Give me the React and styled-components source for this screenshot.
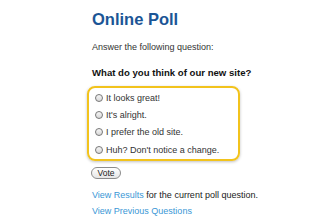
import styled, { createGlobalStyle } from "styled-components";

const GlobalStyle = createGlobalStyle`
  body {
    margin: 0;
    background: #fff;
    font-family: "Liberation Sans", Arial, sans-serif;
    color: #222;
  }
`;

const Page = styled.div`
  width: 330px;
  height: 220px;
  padding: 9px 0 0 92px;
  box-sizing: border-box;
  overflow: hidden;
`;

const Title = styled.h1`
  margin: 0;
  font-size: 16.5px;
  line-height: 20px;
  font-weight: bold;
  color: #1b5596;
`;

const Intro = styled.p`
  margin: 12px 0 0;
  font-size: 9px;
  line-height: 12px;
  color: #333;
`;

const Question = styled.h2`
  margin: 14px 0 0;
  font-size: 9.6px;
  line-height: 12px;
  font-weight: bold;
  color: #111;
`;

const OptionsBox = styled.div`
  margin: 7px 0 0 -5px;
  width: 153px;
  box-sizing: border-box;
  border: 2px solid #f2c31c;
  border-radius: 8px;
  box-shadow: 0 1px 3px rgba(0, 0, 0, 0.25);
  padding: 1px 0 1px 6px;
  display: flex;
  flex-direction: column;
`;

const Option = styled.label`
  display: flex;
  align-items: center;
  gap: 3px;
  height: 17.3px;
  font-size: 9px;
  color: #333;
`;

const Radio = styled.span`
  width: 8px;
  height: 8px;
  box-sizing: border-box;
  border-radius: 50%;
  border: 1px solid #777;
  background: linear-gradient(#f6f6f6, #d8d8d8);
`;

const VoteButton = styled.button`
  display: block;
  margin-top: 6px;
  height: 12px;
  width: 30px;
  padding: 0;
  border: 1px solid #8c8c8c;
  border-radius: 7px;
  background: linear-gradient(#ffffff, #e6e6e6);
  font-family: inherit;
  font-size: 8.5px;
  line-height: 10px;
  color: #222;
  margin-left: -1px;
`;

const Line = styled.p`
  margin: ${(p) => p.$top}px 0 0;
  font-size: 9px;
  line-height: 12px;
  color: #222;
`;

const Link = styled.a`
  color: #3a97d6;
  text-decoration: none;
`;

const options = [
  "It looks great!",
  "It's alright.",
  "I prefer the old site.",
  "Huh? Don't notice a change.",
];

export default function App() {
  return (
    <Page>
      <GlobalStyle />
      <Title>Online Poll</Title>
      <Intro>Answer the following question:</Intro>
      <Question>What do you think of our new site?</Question>
      <OptionsBox>
        {options.map((o) => (
          <Option key={o}>
            <Radio />
            {o}
          </Option>
        ))}
      </OptionsBox>
      <VoteButton>Vote</VoteButton>
      <Line $top={10}>
        <Link href="#">View Results</Link> for the current poll question.
      </Line>
      <Line $top={4}>
        <Link href="#">View Previous Questions</Link>
      </Line>
    </Page>
  );
}
